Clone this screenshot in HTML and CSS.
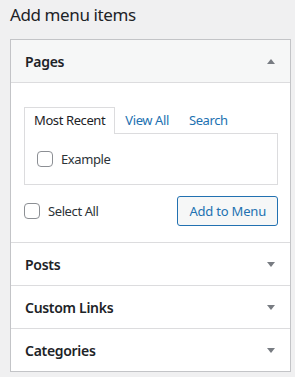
FILE: index.html
```html
<!DOCTYPE html>
<html lang="en">
<head>
    <meta charset="UTF-8">
    <meta name="viewport" content="width=device-width, initial-scale=1.0">
    <title>Add menu items</title>
    <link rel="stylesheet" href="styles.css">
</head>
<body>
    <h2 class="title">Add menu items</h2>

    <div class="accordion">
        <div class="section open">
            <div class="section-head">
                <span>Pages</span>
                <span class="arrow up"></span>
            </div>
            <div class="section-body">
                <ul class="tabs">
                    <li class="tab active">Most Recent</li>
                    <li class="tab">View All</li>
                    <li class="tab">Search</li>
                </ul>
                <div class="tab-panel">
                    <label class="check">
                        <input type="checkbox">
                        <span>Example</span>
                    </label>
                </div>
                <div class="actions">
                    <label class="check">
                        <input type="checkbox">
                        <span>Select All</span>
                    </label>
                    <button class="add-btn">Add to Menu</button>
                </div>
            </div>
        </div>

        <div class="section">
            <div class="section-head">
                <span>Posts</span>
                <span class="arrow"></span>
            </div>
        </div>

        <div class="section">
            <div class="section-head">
                <span>Custom Links</span>
                <span class="arrow"></span>
            </div>
        </div>

        <div class="section">
            <div class="section-head">
                <span>Categories</span>
                <span class="arrow"></span>
            </div>
        </div>
    </div>
</body>
</html>
```

FILE: styles.css
```css
body {
    margin: 0;
    padding: 0 4px 0 10px;
    background-color: #f0f0f1;
    font-family: "Noto Sans", "Open Sans", sans-serif;
    font-size: 13px;
    color: #1d2327;
}

.title {
    margin: 0;
    padding-top: 3px;
    height: 36px;
    font-size: 17px;
    font-weight: 400;
    line-height: 24px;
    letter-spacing: -0.4px;
}

.accordion {
    width: 279px;
    border: 1px solid #c3c4c7;
    background-color: #fff;
}

.section {
    border-bottom: 1px solid #dcdcde;
}

.section:last-child {
    border-bottom: none;
}

.section-head {
    height: 42px;
    padding: 0 15px 0 14px;
    display: flex;
    align-items: center;
    justify-content: space-between;
    font-size: 14px;
    font-weight: 600;
    letter-spacing: -0.3px;
}

.open .section-head {
    background-color: #f6f7f7;
    border-bottom: 1px solid #dcdcde;
}

.arrow {
    width: 0;
    height: 0;
    border-left: 4px solid transparent;
    border-right: 4px solid transparent;
    border-top: 5px solid #787c82;
}

.arrow.up {
    border-top: none;
    border-bottom: 5px solid #787c82;
}

.section-body {
    padding: 24px 12px 16px 13px;
    letter-spacing: -0.4px;
}

.tabs {
    list-style: none;
    margin: 0;
    padding: 0;
    display: flex;
}

.tab {
    height: 25px;
    line-height: 25px;
    padding: 0 9px;
    color: #2271b1;
    border: 1px solid transparent;
    border-bottom: none;
}

.tab.active {
    color: #1d2327;
    border-color: #dcdcde;
    background-color: #fff;
    position: relative;
    margin-bottom: -1px;
    height: 26px;
}

.tab-panel {
    border: 1px solid #dcdcde;
    height: 50px;
    padding: 0 12px;
    display: flex;
    align-items: center;
}

.check {
    display: flex;
    align-items: center;
    gap: 8px;
    color: #2c3338;
}

.check input {
    appearance: none;
    width: 16px;
    height: 16px;
    margin: 0;
    border: 1px solid #8c8f94;
    border-radius: 4px;
    background-color: #fff;
}

.actions {
    margin-top: 11px;
    display: flex;
    align-items: center;
    justify-content: space-between;
}

.add-btn {
    height: 30px;
    padding: 0 11px;
    font-family: inherit;
    font-size: 13px;
    letter-spacing: -0.2px;
    color: #2271b1;
    background-color: #f6f7f7;
    border: 1px solid #2271b1;
    border-radius: 3px;
}
```
